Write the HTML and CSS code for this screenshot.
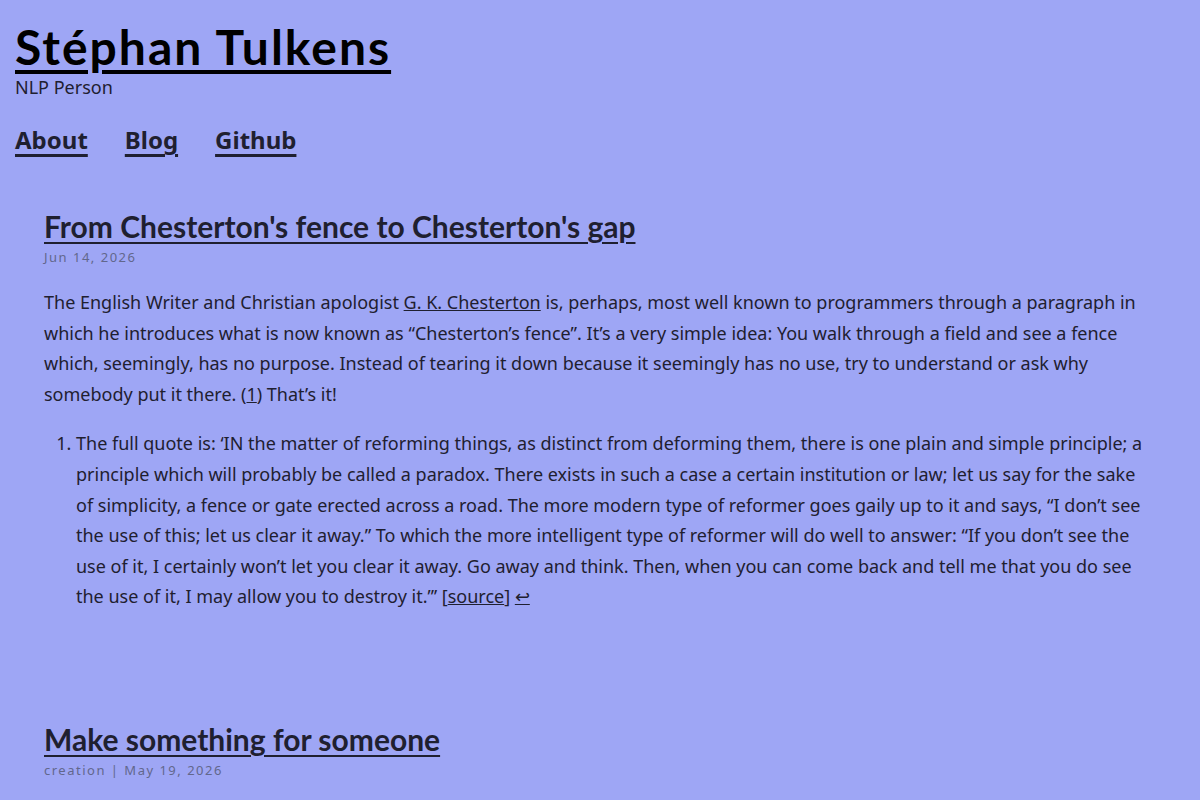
FILE: index.html
```html
<!DOCTYPE html>
<html lang="en">
<head>
  <meta charset="UTF-8">
  <meta name="viewport" content="width=device-width, initial-scale=1.0">
  <title>Stéphan Tulkens</title>
  <link rel="stylesheet" href="styles.css">
</head>
<body>
  <header class="site-header">
    <h1 class="site-title"><a href="#">Stéphan Tulkens</a></h1>
    <p class="site-tagline">NLP Person</p>
    <nav class="site-nav">
      <a href="#">About</a>
      <a href="#">Blog</a>
      <a href="#">Github</a>
    </nav>
  </header>

  <main class="posts">
    <article class="post">
      <h2 class="post-title"><a href="#">From Chesterton's fence to Chesterton's gap</a></h2>
      <p class="post-meta">Jun 14, 2026</p>
      <p>The English Writer and Christian apologist <a href="#">G. K. Chesterton</a> is, perhaps, most well known to programmers through a paragraph in which he introduces what is now known as “Chesterton’s fence”. It’s a very simple idea: You walk through a field and see a fence which, seemingly, has no purpose. Instead of tearing it down because it seemingly has no use, try to understand or ask why somebody put it there. (<a href="#">1</a>) That’s it!</p>
      <ol class="footnotes">
        <li>The full quote is: ‘IN the matter of reforming things, as distinct from deforming them, there is one plain and simple principle; a principle which will probably be called a paradox. There exists in such a case a certain institution or law; let us say for the sake of simplicity, a fence or gate erected across a road. The more modern type of reformer goes gaily up to it and says, “I don’t see the use of this; let us clear it away.” To which the more intelligent type of reformer will do well to answer: “If you don’t see the use of it, I certainly won’t let you clear it away. Go away and think. Then, when you can come back and tell me that you do see the use of it, I may allow you to destroy it.”’ [<a href="#">source</a>] <a href="#">↩</a></li>
      </ol>
    </article>

    <article class="post">
      <h2 class="post-title"><a href="#">Make something for someone</a></h2>
      <p class="post-meta">creation | May 19, 2026</p>
    </article>
  </main>
</body>
</html>
```

FILE: styles.css
```css
body {
  margin: 0;
  padding: 0 15px;
  background: #9ea6f5;
  color: #1f2030;
  font-family: "Noto Sans", sans-serif;
  font-size: 18px;
  line-height: 1.7;
}
a {
  color: inherit;
}
.site-header {
  padding-top: 18px;
}
.site-title {
  margin: 0;
  font-family: Lato, sans-serif;
  font-size: 48px;
  font-weight: 700;
  letter-spacing: 2px;
  line-height: 1.2;
  color: #000;
}
.site-title a {
  text-decoration-thickness: 4px;
  text-underline-offset: 5px;
}
.site-tagline {
  margin: -4px 0 0;
  font-size: 18px;
}
.site-nav {
  display: flex;
  gap: 37px;
  margin-top: 18px;
}
.site-nav a {
  font-size: 24px;
  font-weight: 700;
  text-decoration-thickness: 3px;
  text-underline-offset: 5px;
}
.posts {
  padding: 46px 29px 0;
}
.post {
  margin-bottom: 108px;
}
.post-title {
  margin: 0;
  font-family: Lato, sans-serif;
  font-size: 30px;
  font-weight: 700;
  line-height: 1.3;
}
.post-title a {
  text-decoration-thickness: 2px;
  text-underline-offset: 4px;
}
.post-meta {
  margin: 9px 0 19px;
  font-size: 13px;
  letter-spacing: 1.5px;
  color: #62678c;
}
.post p {
  margin-top: 0;
}
.post-meta + p {
  margin-bottom: 19px;
}
.footnotes {
  margin: 0;
  padding-left: 32px;
}
```
